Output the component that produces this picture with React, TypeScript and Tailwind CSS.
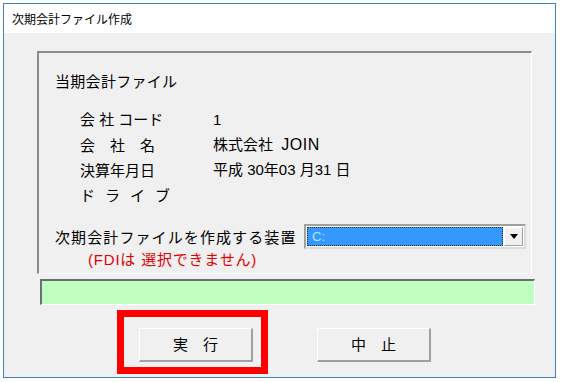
import React from "react";

const jp = { fontFamily: '"Noto Sans CJK JP", "Noto Sans", sans-serif' };
const mix = { fontFamily: '"Liberation Sans", "Noto Sans CJK JP", sans-serif' };

export default function App() {
  return (
    <div className="w-[561px] h-[382px] bg-white pt-[3px] pl-[3px]" style={jp}>
      <div className="w-[553px] h-[375px] border border-[#3f82c4] flex flex-col">
        <div className="h-[29px] bg-white flex items-center pl-[8px] text-[12px] text-black leading-none">
          次期会計ファイル作成
        </div>
        <div className="flex-1 bg-[#f0f0f0] flex flex-col">
          <div className="ml-[33px] mt-[18px] w-[495px] h-[223px] border-t-2 border-l-2 border-t-[#8c8c8c] border-l-[#8c8c8c] border-r border-b border-r-white border-b-white pl-[16px] text-[15px] text-black flex flex-col">
            <div className="mt-[16px] h-[24px] leading-[24px] tracking-[0.3px]">当期会計ファイル</div>
            <div className="mt-[14px] pl-[25px] flex flex-col">
              <div className="h-[25px] leading-[25px] flex">
                <div className="w-[133px] whitespace-pre" style={mix}>会 社 コード</div>
                <div style={mix}>1</div>
              </div>
              <div className="h-[25px] leading-[25px] flex">
                <div className="w-[133px] whitespace-pre">会　社　名</div>
                <div className="whitespace-pre" style={mix}>株式会社  <span className="text-[16px] tracking-[0.5px]">JOIN</span></div>
              </div>
              <div className="h-[25px] leading-[25px] flex">
                <div className="w-[133px]">決算年月日</div>
                <div className="whitespace-pre" style={mix}>平成 30年03 月31 日</div>
              </div>
              <div className="h-[25px] leading-[25px] flex">
                <div className="w-[133px] tracking-[10px]">ドライブ</div>
              </div>
            </div>
            <div className="mt-[17px] h-[25px] flex items-center">
              <div className="w-[249px] leading-[25px] whitespace-nowrap tracking-[1.1px]">次期会計ファイルを作成する装置</div>
              <div className="w-[222px] h-[25px] border-2 border-t-[#a0a0a0] border-l-[#a0a0a0] border-r-[#dcdcdc] border-b-[#dcdcdc] bg-white flex items-center p-[1px]">
                <div className="flex-1 h-[19px] bg-[#3399ff] border border-dotted border-[#2a2a2a] flex items-center pl-[4px] text-[13px] text-[#bfe0ff] leading-none" style={mix}>
                  C:
                </div>
                <div className="w-[19px] h-[19px] ml-[1px] bg-[#f0f0f0] border border-t-white border-l-white border-r-[#a0a0a0] border-b-[#a0a0a0] flex items-center justify-center">
                  <svg width="8" height="5" viewBox="0 0 8 5">
                    <path d="M0 0 H8 L4 5 Z" fill="#000" />
                  </svg>
                </div>
              </div>
            </div>
            <div className="mt-[1px] h-[20px] leading-[20px] pl-[33px] text-[#e00000] whitespace-pre tracking-[0.8px]" style={mix}>
              (FDIは 選択できません)
            </div>
          </div>
          <div className="ml-[36px] mt-[5px] w-[495px] h-[26px] bg-[#c0ffc0] border-t-2 border-l-2 border-t-[#6e6e6e] border-l-[#6e6e6e] border-r border-b border-r-white border-b-white" />
          <div className="mt-[5px] flex items-start">
            <div className="ml-[113px] w-[151px] h-[64px] border-[7px] border-[#ff0000] pl-[15px] pt-[11px]">
              <button className="w-[114px] h-[34px] bg-[#f0f0f0] border border-t-white border-l-white border-r-2 border-b-2 border-r-[#a0a0a0] border-b-[#a0a0a0] text-[15px] text-black whitespace-pre flex items-center justify-center" style={jp}>
                実　行
              </button>
            </div>
            <button className="ml-[49px] mt-[18px] w-[114px] h-[34px] bg-[#f0f0f0] border border-t-white border-l-white border-r-2 border-b-2 border-r-[#a0a0a0] border-b-[#a0a0a0] text-[15px] text-black whitespace-pre flex items-center justify-center" style={jp}>
              中　止
            </button>
          </div>
        </div>
      </div>
    </div>
  );
}
